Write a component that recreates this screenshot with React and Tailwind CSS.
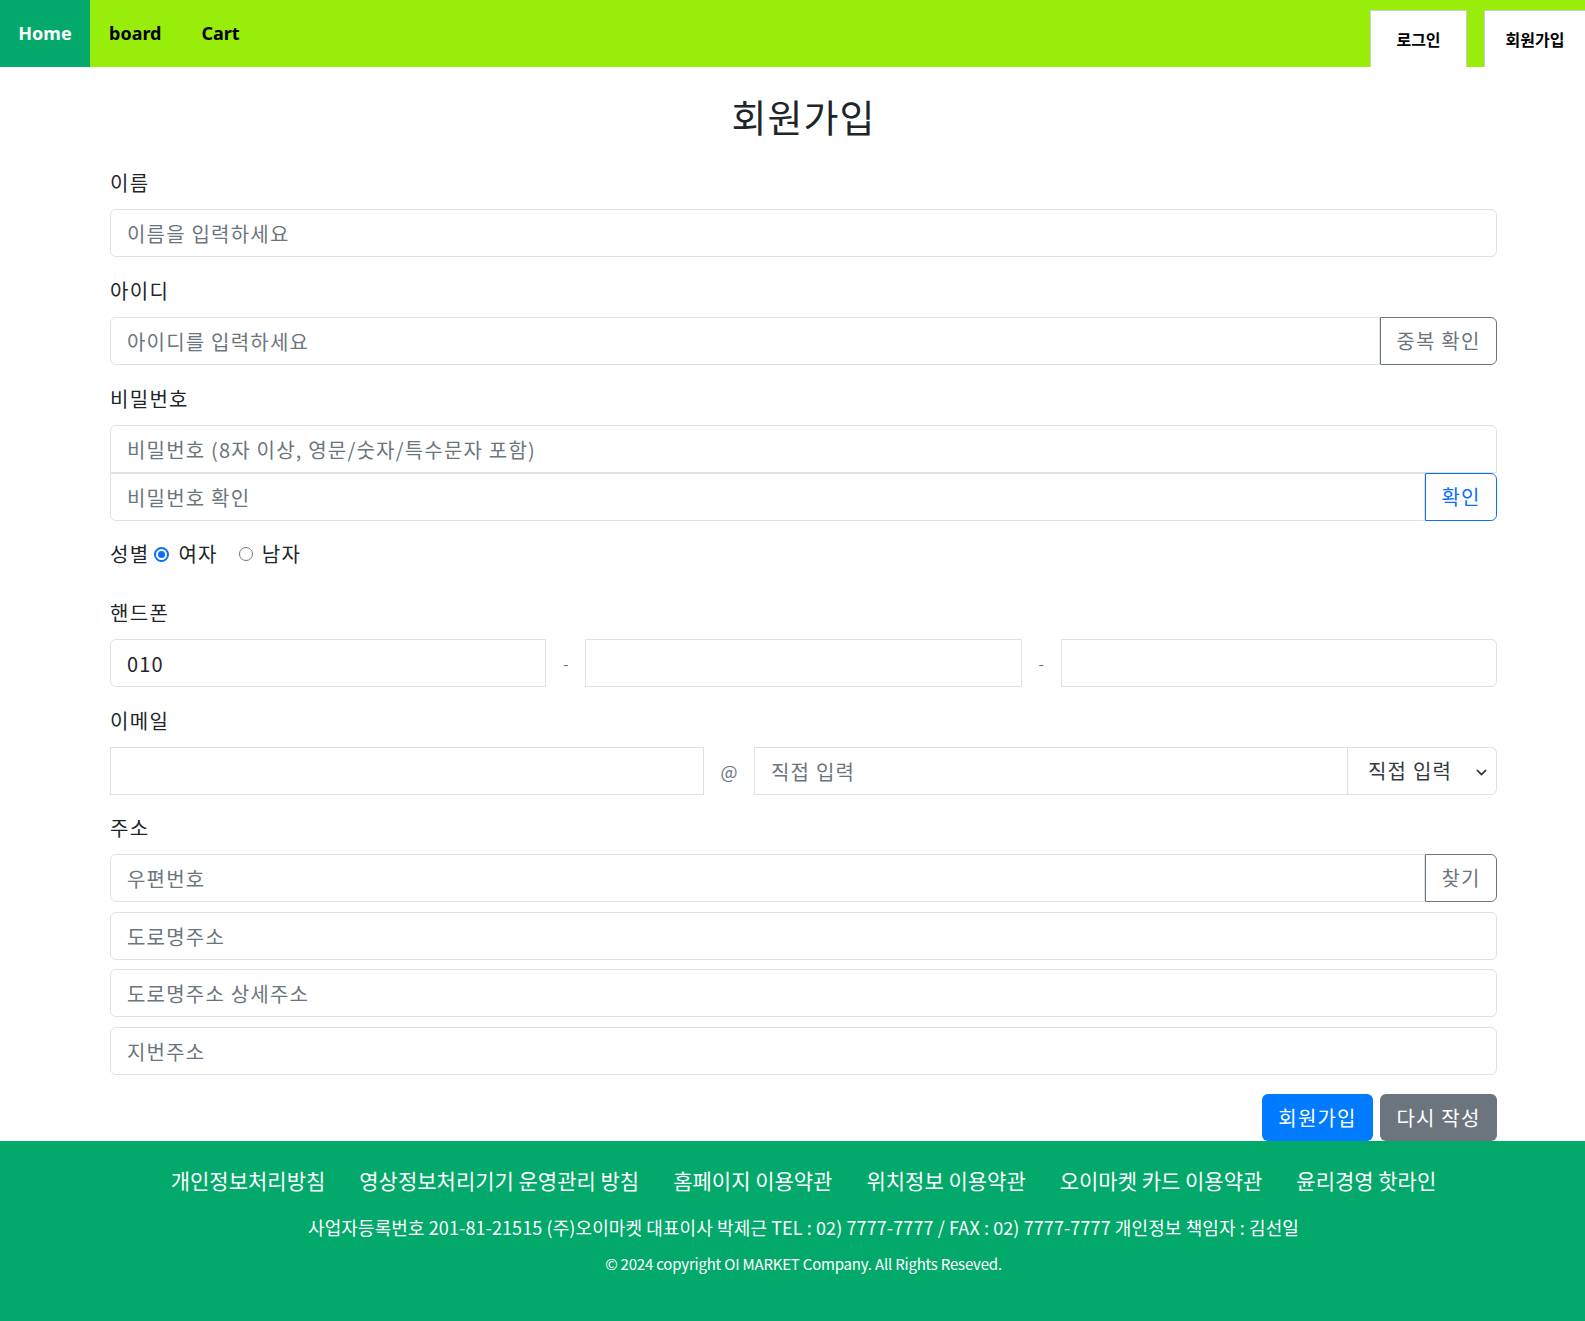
import React from "react";

const font = { fontFamily: '"Noto Sans CJK KR", "Noto Sans", sans-serif' };

function Label({ children }) {
  return <div className="text-[20px] leading-[30px] tracking-[1.3px] text-[#212529] mb-[11px]">{children}</div>;
}

const inputBase =
  "h-[48px] border border-[#dee2e6] bg-white px-[16px] text-[20px] tracking-[1.2px] text-[#212529] placeholder:text-[#6c757d] outline-none min-w-0";

export default function App() {
  return (
    <div style={font} className="min-h-[1321px] bg-white flex flex-col">
      {/* Header */}
      <header className="h-[67px] shrink-0 bg-[#98ED0B] flex items-stretch">
        <a className="w-[90px] bg-[#03A96B] text-white font-bold text-[18px] flex items-center justify-center" style={{ fontFamily: '"Noto Sans", sans-serif' }}>
          Home
        </a>
        <a className="px-[19px] text-black font-bold text-[18px] flex items-center" style={{ fontFamily: '"Noto Sans", sans-serif' }}>
          board
        </a>
        <a className="px-[21px] text-black font-bold text-[18px] flex items-center" style={{ fontFamily: '"Noto Sans", sans-serif' }}>
          Cart
        </a>
        <div className="flex-1" />
        <div className="flex items-end gap-[17px]">
          <button className="w-[97px] h-[57px] bg-white border border-b-0 border-[#cccccc] font-bold text-[16px] text-black">
            로그인
          </button>
          <button className="w-[101px] h-[57px] bg-white border border-r-0 border-b-0 border-[#cccccc] font-bold text-[16px] text-black">
            회원가입
          </button>
        </div>
      </header>

      {/* Form */}
      <main className="pl-[110px] pr-[88px] pt-[27px] flex-1">
        <h1 className="text-center text-[38px] leading-[44px] tracking-[1px] text-[#212529] mb-[30px]">회원가입</h1>

        <div className="mb-[19px]">
          <Label>이름</Label>
          <input className={`${inputBase} w-full rounded-md`} placeholder="이름을 입력하세요" />
        </div>

        <div className="mb-[19px]">
          <Label>아이디</Label>
          <div className="flex">
            <input className={`${inputBase} flex-1 rounded-l-md`} placeholder="아이디를 입력하세요" />
            <button className="h-[48px] w-[117px] border border-[#6c757d] text-[#6c757d] text-[20px] tracking-[1.2px] rounded-r-md bg-white">
              중복 확인
            </button>
          </div>
        </div>

        <div className="mb-[18px]">
          <Label>비밀번호</Label>
          <input className={`${inputBase} w-full rounded-t-md block`} placeholder="비밀번호 (8자 이상, 영문/숫자/특수문자 포함)" />
          <div className="flex">
            <input className={`${inputBase} flex-1 rounded-bl-md`} placeholder="비밀번호 확인" />
            <button className="h-[48px] w-[72px] border border-[#0d6efd] text-[#0d6efd] text-[20px] tracking-[1.2px] rounded-r-md bg-white">
              확인
            </button>
          </div>
        </div>

        <div className="flex items-center text-[20px] leading-[30px] tracking-[1.3px] text-[#212529] mb-[29px]">
          <span>성별</span>
          <span className="ml-[5px] w-[15px] h-[15px] rounded-full border-2 border-[#0d6efd] bg-white flex items-center justify-center">
            <span className="w-[7px] h-[7px] rounded-full bg-[#0d6efd]" />
          </span>
          <span className="ml-[9px]">여자</span>
          <span className="ml-[21px] w-[14px] h-[14px] rounded-full border border-[#767676]" />
          <span className="ml-[9px]">남자</span>
        </div>

        <div className="mb-[19px]">
          <Label>핸드폰</Label>
          <div className="flex items-center">
            <input className={`${inputBase} flex-1 rounded-l-md`} defaultValue="010" />
            <span className="w-[39px] text-center text-[16px] text-[#6c757d]">-</span>
            <input className={`${inputBase} flex-1`} />
            <span className="w-[39px] text-center text-[16px] text-[#6c757d]">-</span>
            <input className={`${inputBase} flex-1 rounded-r-md`} />
          </div>
        </div>

        <div className="mb-[18px]">
          <Label>이메일</Label>
          <div className="flex items-center">
            <input className={`${inputBase} flex-1`} />
            <span className="w-[50px] text-center text-[18px] text-[#6c757d]">@</span>
            <input className={`${inputBase} flex-1`} placeholder="직접 입력" />
            <div className="relative w-[149px] h-[48px] border border-l-0 border-[#dee2e6] rounded-r-md flex items-center pl-[20px] text-[20px] tracking-[1.2px] text-[#343a40]">
              직접 입력
              <svg className="absolute right-[9px] top-[19px]" width="11" height="11" viewBox="0 0 16 16">
                <path d="M2 5l6 6 6-6" fill="none" stroke="#343a40" strokeWidth="2.5" strokeLinecap="round" strokeLinejoin="round" />
              </svg>
            </div>
          </div>
        </div>

        <div className="mb-[19px]">
          <Label>주소</Label>
          <div className="flex mb-[10px]">
            <input className={`${inputBase} flex-1 rounded-l-md`} placeholder="우편번호" />
            <button className="h-[48px] w-[72px] border border-[#6c757d] text-[#6c757d] text-[20px] tracking-[1.2px] rounded-r-md bg-white">
              찾기
            </button>
          </div>
          <input className={`${inputBase} w-full rounded-md block mb-[9px]`} placeholder="도로명주소" />
          <input className={`${inputBase} w-full rounded-md block mb-[10px]`} placeholder="도로명주소 상세주소" />
          <input className={`${inputBase} w-full rounded-md block`} placeholder="지번주소" />
        </div>

        <div className="flex justify-end gap-[7px]">
          <button className="h-[47px] w-[111px] rounded-md bg-[#007bff] text-white text-[20px] tracking-[1.2px]">회원가입</button>
          <button className="h-[47px] w-[117px] rounded-md bg-[#6c757d] text-white text-[20px] tracking-[1.2px]">다시 작성</button>
        </div>
      </main>

      {/* Footer */}
      <footer className="h-[180px] shrink-0 bg-[#03A96B] text-white flex flex-col items-center pt-[24px] pl-[22px]">
        <div className="flex gap-[34px] text-[21px] leading-[31px]">
          <span>개인정보처리방침</span>
          <span>영상정보처리기기 운영관리 방침</span>
          <span>홈페이지 이용약관</span>
          <span>위치정보 이용약관</span>
          <span>오이마켓 카드 이용약관</span>
          <span>윤리경영 핫라인</span>
        </div>
        <div className="mt-[18px] text-[18px] leading-[26px] tracking-[0.1px]">
          사업자등록번호 201-81-21515 (주)오이마켓 대표이사 박제근 TEL : 02) 7777-7777 / FAX : 02) 7777-7777 개인정보 책임자 : 김선일
        </div>
        <div className="mt-[14px] text-[15px] leading-[20px] tracking-[-0.2px]">
          © 2024 copyright OI MARKET Company. All Rights Reseved.
        </div>
      </footer>
    </div>
  );
}
